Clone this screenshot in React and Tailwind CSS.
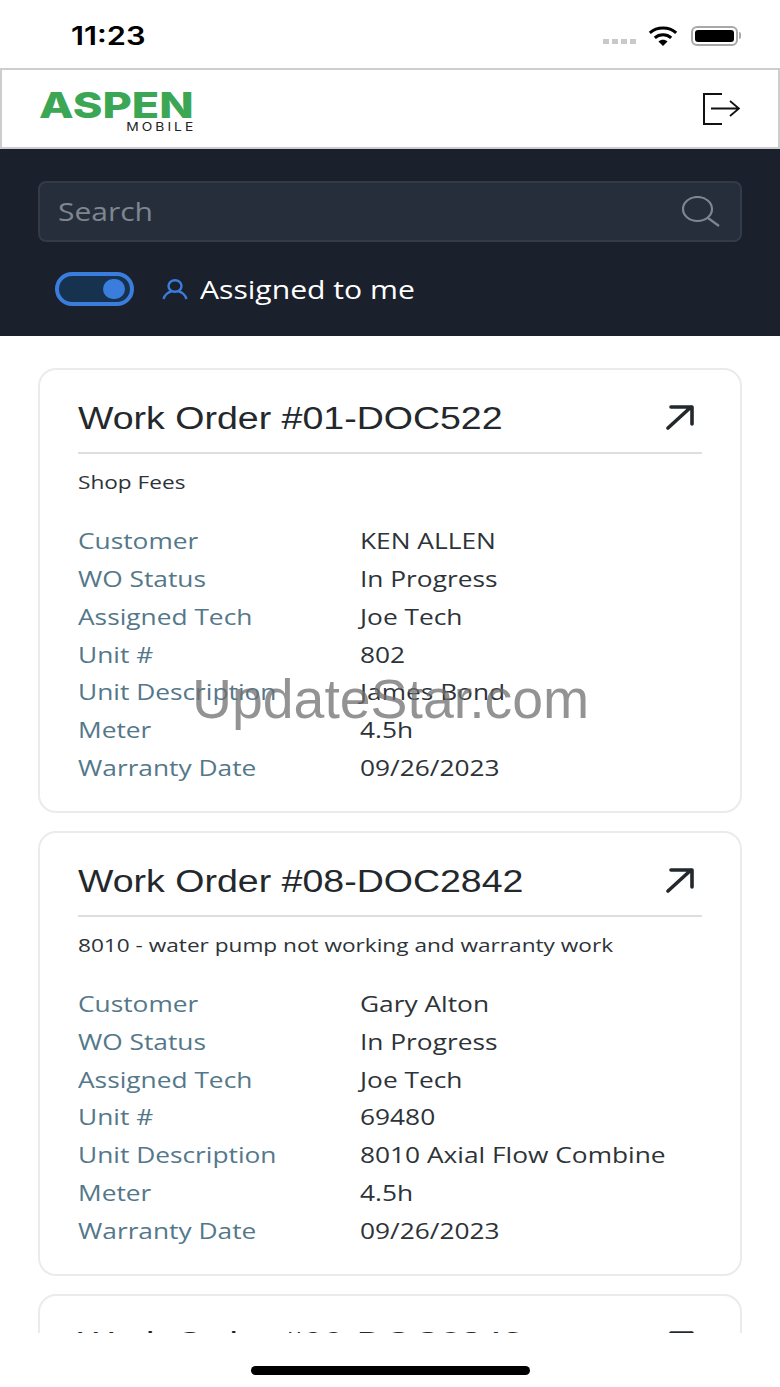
import React from 'react';

const orders = [
    {
        id: '01-DOC522',
        note: 'Shop Fees',
        customer: 'KEN ALLEN',
        unit: '802',
        description: 'James Bond',
    },
    {
        id: '08-DOC2842',
        note: '8010 - water pump not working and warranty work',
        customer: 'Gary Alton',
        unit: '69480',
        description: '8010 Axial Flow Combine',
    },
    {
        id: '09-DOC2843',
        note: '8010 - water pump not working',
        customer: 'Gary Alton',
        unit: '69480',
        description: '8010 Axial Flow Combine',
    },
];

const StatusBar = () => (
    <div className="h-[68px] shrink-0 bg-white flex items-center justify-between pt-[3px] pl-[71px] pr-[39px]">
        <span className="block mt-[2px] origin-left scale-x-[1.23] font-['Inter',sans-serif] font-semibold text-[25px] text-black">11:23</span>
        <div className="flex items-center">
            <div className="flex gap-[3px] mt-[12px] mr-[12px]">
                {[0, 1, 2, 3].map((i) => (
                    <div key={i} className="w-[6px] h-[5px] bg-[#c9c9c9]" />
                ))}
            </div>
            <svg width="30" height="20" viewBox="0 0 32 22" className="mr-[13px]">
                <path d="M1.5 7.5 C9.5 0.5 22.5 0.5 30.5 7.5" fill="none" stroke="#000" strokeWidth="3.4" />
                <path d="M7 13 C12 8.6 20 8.6 25 13" fill="none" stroke="#000" strokeWidth="3.4" />
                <path d="M11 17 C14 14.4 18 14.4 21 17 L16 22 Z" fill="#000" />
            </svg>
            <div className="relative w-[47px] h-[20px] mr-[3px] rounded-[6px] border-2 border-[#a8a8a8] p-[2px]">
                <div className="w-full h-full rounded-[3px] bg-black" />
                <div className="absolute top-[4px] -right-[5px] w-[2px] h-[7px] rounded-r-sm bg-[#a8a8a8]" />
            </div>
        </div>
    </div>
);

const Header = () => (
    <div className="h-[81px] shrink-0 bg-white border-2 border-[#cdcdcd] flex items-center justify-between pl-[38px] pr-[38px]">
        <div className="w-[154px] flex flex-col items-end pt-[7px]">
            <span className="block origin-right scale-x-[1.25] font-['Inter',sans-serif] font-extrabold text-[36px] leading-[31px] text-[#3ba755]">ASPEN</span>
            <span className="block origin-right scale-x-[1.2] font-['Inter',sans-serif] text-[11.5px] leading-[13px] tracking-[2.5px] -mr-[2px] text-[#222]">MOBILE</span>
        </div>
        <svg width="38" height="32" viewBox="0 0 38 32" fill="none" stroke="#111" strokeWidth="2">
            <path d="M20 1 H2 V31 H20" />
            <path d="M9 15.5 H37 M28 8 L37 15.5 L28 23" strokeWidth="1.8" />
        </svg>
    </div>
);

const SearchPanel = () => (
    <div className="h-[187px] shrink-0 bg-[#1a202c] px-[38px] pt-[32px]">
        <div className="h-[61px] rounded-lg bg-[#272e3b] border-2 border-[#343b48] flex items-center justify-between pl-[18px] pr-[20px]">
            <span className="block origin-left scale-x-[1.2] font-['Open_Sans',sans-serif] text-[25px] text-[#7d8691]">Search</span>
            <svg width="38" height="31" viewBox="0 0 38 31" fill="none" stroke="#7d8691" strokeWidth="2.2">
                <ellipse cx="15.5" cy="13" rx="14.5" ry="12" />
                <path d="M26 22 L37 30" />
            </svg>
        </div>
        <div className="flex items-center mt-[30px] pl-[17px]">
            <div className="w-[79px] h-[34px] rounded-full border-[4px] border-[#3b7ddd] bg-[#17324f] flex items-center justify-end pr-[5px]">
                <div className="w-[22px] h-[20px] rounded-full bg-[#3b7ddd]" />
            </div>
            <svg width="26" height="21" viewBox="0 0 26 21" fill="none" stroke="#3b7ddd" strokeWidth="2.4" className="ml-[28px] mr-[12px]">
                <ellipse cx="13" cy="7" rx="6.5" ry="5.8" />
                <path d="M1.5 20 C3 15.5 7 13 9.5 12.4 M24.5 20 C23 15.5 19 13 16.5 12.4" />
            </svg>
            <span className="block origin-left scale-x-[1.205] font-['Open_Sans',sans-serif] text-[25px] leading-[34px] text-white">Assigned to me</span>
        </div>
    </div>
);

const Row = ({ label, value }) => (
    <div className="flex h-[37.75px] items-center font-['Open_Sans',sans-serif] text-[22px]">
        <div className="w-[282px] shrink-0">
            <span className="block w-fit origin-left scale-x-[1.195] text-[#54788a]">{label}</span>
        </div>
        <span className="block origin-left scale-x-[1.195] text-[#2d3338]">{value}</span>
    </div>
);

const OrderCard = ({ order }) => (
    <div className="shrink-0 rounded-[18px] border-2 border-[#e9ebed] bg-white px-[38px] pt-[28px] pb-[25px]">
        <div className="flex items-center justify-between h-[38px] pr-[7px]">
            <span className="block mt-[4px] origin-left scale-x-[1.21] font-['Liberation_Sans',sans-serif] text-[31px] text-[#23282c]">
                Work Order #{order.id}
            </span>
            <svg width="30" height="26" viewBox="0 0 30 26" fill="none" stroke="#23282c" strokeWidth="3.6" strokeLinecap="round" strokeLinejoin="round">
                <path d="M3 24 L26 3 M6 3 H27 V20" />
            </svg>
        </div>
        <div className="mt-[16px] border-t-2 border-[#dcdfe1]" />
        <div className="mt-[14px] h-[28px] font-['Open_Sans',sans-serif] text-[19px] leading-[28px] text-[#2d3338]">
            <span className="block w-fit origin-left scale-x-[1.19]">{order.note}</span>
        </div>
        <div className="mt-[26px]">
            <Row label="Customer" value={order.customer} />
            <Row label="WO Status" value="In Progress" />
            <Row label="Assigned Tech" value="Joe Tech" />
            <Row label="Unit #" value={order.unit} />
            <Row label="Unit Description" value={order.description} />
            <Row label="Meter" value="4.5h" />
            <Row label="Warranty Date" value="09/26/2023" />
        </div>
    </div>
);

export default function App() {
    return (
        <div className="relative w-[780px] h-[1387px] bg-white flex flex-col overflow-hidden">
            <StatusBar />
            <Header />
            <SearchPanel />

            {/* Work order list, cut off above the home bar */}
            <div className="flex-1 min-h-0 overflow-hidden px-[38px] pt-[32px] flex flex-col gap-[17.5px]">
                {orders.map((order) => (
                    <OrderCard key={order.id} order={order} />
                ))}
            </div>

            <div className="h-[54px] shrink-0 flex justify-center pt-[33px]">
                <div className="w-[279px] h-[9px] rounded-full bg-black" />
            </div>

            {/* Watermark */}
            <div className="absolute left-[192px] top-[664px] font-['Liberation_Sans',sans-serif] text-[55.4px] leading-[70px] text-[#6f6f6f]/75">
                UpdateStar.com
            </div>
        </div>
    );
}
